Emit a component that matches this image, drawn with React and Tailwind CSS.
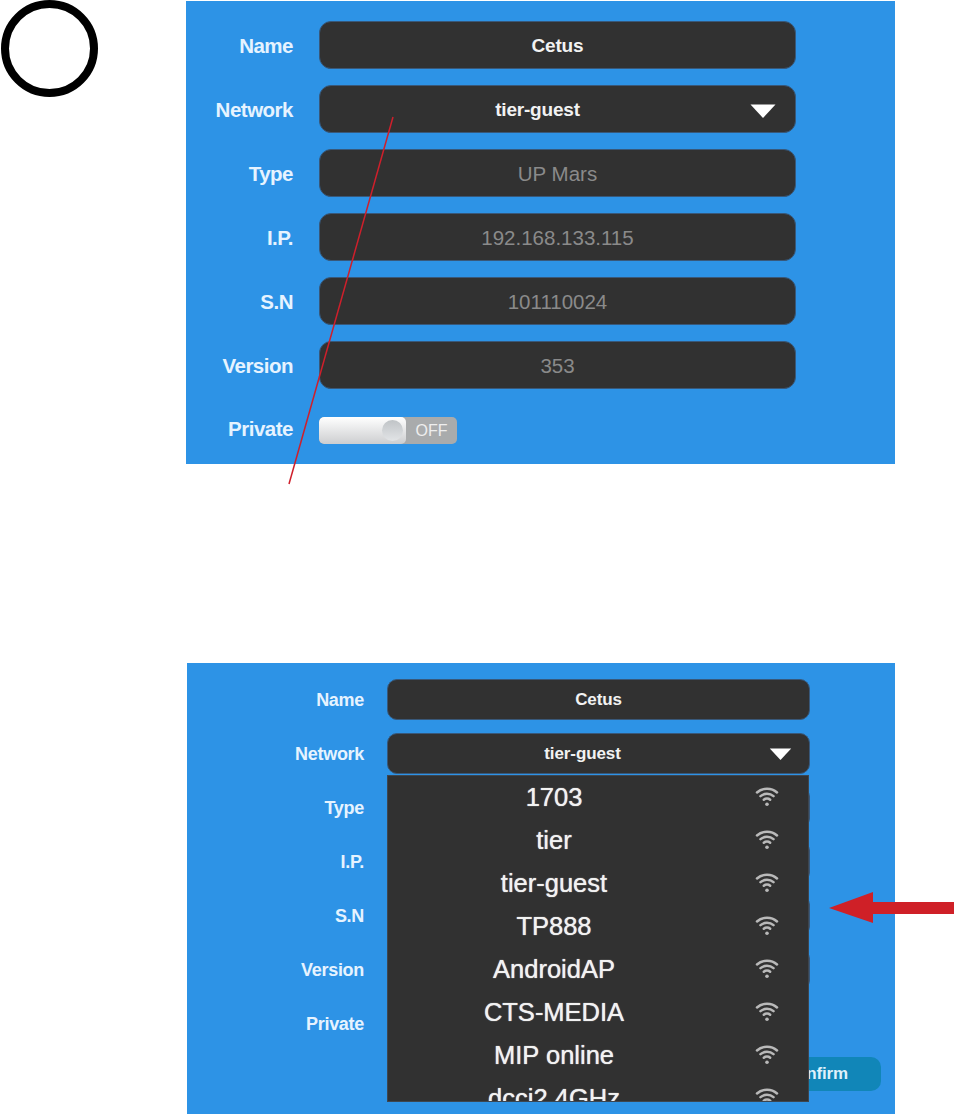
const NETWORKS = ["1703", "tier", "tier-guest", "TP888", "AndroidAP", "CTS-MEDIA", "MIP online", "dcci2.4GHz"];

const font = { fontFamily: '"Liberation Sans", Arial, sans-serif' };

function WifiIcon() {
  return (
    <svg width="24" height="22" viewBox="0 0 24 22" fill="none" stroke="#b9b9b9" strokeWidth="2.5" strokeLinecap="round">
      <path d="M2 7.5C7.5 2.4 16.5 2.4 22 7.5" />
      <path d="M5.5 11.2C9 8 15 8 18.5 11.2" />
      <path d="M8.8 14.7C10.6 13.2 13.4 13.2 15.2 14.7" />
      <circle cx="12" cy="19.3" r="1.8" fill="#b9b9b9" stroke="none" />
    </svg>
  );
}

function Caret({ className }) {
  return (
    <svg className={className} viewBox="0 0 26 14">
      <path d="M0.5 0.5H25.5L13 14Z" fill="#fff" />
    </svg>
  );
}

function Toggle({ className }) {
  return (
    <div className={`flex overflow-hidden rounded-[5px] bg-[#a9abac] ${className}`}>
      <div className="relative h-full w-[87px] rounded-[5px] bg-gradient-to-b from-white to-[#cdced0]">
        <div className="absolute right-[3px] top-[3px] h-[21px] w-[21px] rounded-full bg-gradient-to-b from-[#c0c4c7] to-[#e2e4e6]" />
      </div>
      <div className="flex-1 text-center text-[16px] leading-[28px] text-[#eeeeee]">OFF</div>
    </div>
  );
}

function TopRow({ label, value, muted, caret }) {
  return (
    <div className="flex h-12 items-center gap-[26px]">
      <div className="w-[107px] pt-[2px] text-right text-[20.5px] font-bold tracking-[-0.5px] text-[#e6f3ff]">{label}</div>
      <div
        className={`relative flex h-12 w-[477px] items-center justify-center rounded-[12px] border border-[#38587a] bg-[#313131] pt-[2px] ${
          muted ? "text-[20.5px] text-[#8a8a8a]" : "text-[19px] font-bold tracking-[-0.2px] text-[#f2f2f2]"
        } ${caret ? "pr-10" : ""}`}
      >
        {value}
        {caret && <Caret className="absolute right-[19px] top-[18px] h-[14px] w-[26px]" />}
      </div>
    </div>
  );
}

function BottomRow({ label, value, caret }) {
  return (
    <div className="flex h-[41px] items-center gap-[23px]">
      <div className="w-[177px] pt-px text-right text-[18px] font-bold tracking-[-0.3px] text-[#e6f3ff]">{label}</div>
      <div
        className={`relative flex h-[41px] w-[423px] items-center justify-center rounded-[10px] border border-[#38587a] bg-[#313131] pt-px text-[17px] font-bold tracking-[-0.1px] text-[#f2f2f2] ${
          caret ? "pr-8" : ""
        }`}
      >
        {value}
        {caret && <Caret className="absolute right-[17px] top-[14px] h-[12px] w-[23px]" />}
      </div>
    </div>
  );
}

export default function App() {
  return (
    <div className="relative h-[1114px] w-[954px] overflow-hidden bg-white" style={font}>
      {/* Marker and first screen */}
      <div className="flex items-start">
        <div className="ml-px h-[97px] w-[97px] rounded-full border-[8px] border-black" />
        <div className="ml-[88px] mt-px flex h-[463px] w-[709px] flex-col gap-4 bg-[#2d93e6] pt-5">
          <TopRow label="Name" value="Cetus" />
          <TopRow label="Network" value="tier-guest" caret />
          <TopRow label="Type" value="UP Mars" muted />
          <TopRow label="I.P." value="192.168.133.115" muted />
          <TopRow label="S.N" value="101110024" muted />
          <TopRow label="Version" value="353" muted />
          <div className="mt-3 flex h-[27px] items-center gap-[26px]">
            <div className="-mt-[3px] w-[107px] text-right text-[20.5px] font-bold tracking-[-0.5px] text-[#e6f3ff]">Private</div>
            <Toggle className="h-[27px] w-[138px]" />
          </div>
        </div>
      </div>

      {/* Second screen with the list open */}
      <div className="relative ml-[187px] mt-[199px] flex h-[451px] w-[708px] flex-col gap-[13px] bg-[#2d93e6] pt-4">
        <BottomRow label="Name" value="Cetus" />
        <BottomRow label="Network" value="tier-guest" caret />
        <BottomRow label="Type" value="" />
        <BottomRow label="I.P." value="" />
        <BottomRow label="S.N" value="" />
        <BottomRow label="Version" value="" />
        <div className="flex h-[41px] items-center gap-[23px]">
          <div className="w-[177px] pt-px text-right text-[18px] font-bold tracking-[-0.3px] text-[#e6f3ff]">Private</div>
        </div>
        <div className="flex justify-end pr-[14px]">
          <div className="flex h-[34px] w-[130px] items-center justify-center rounded-[10px] bg-[#1186b8] text-[17px] font-bold tracking-[-0.2px] text-[#dff1fb]">
            Confirm
          </div>
        </div>

        <div className="absolute left-[200px] top-[112px] h-[327px] w-[422px] overflow-hidden border border-[#3d4650] bg-[#313131]">
          {NETWORKS.map((name) => (
            <div key={name} className="flex h-[43px] items-center">
              <div className="-mt-px w-[332px] text-center text-[25.5px] text-[#f2f2f2] [text-shadow:0_0_1px_#f2f2f2]">
                {name}
              </div>
              <div className="-mt-[3px] ml-[35px]">
                <WifiIcon />
              </div>
            </div>
          ))}
        </div>
      </div>

      {/* Annotations */}
      <svg className="absolute left-[285px] top-[112px]" width="112" height="376">
        <path d="M108 5L4 372" stroke="#cf1f2b" strokeWidth="1.5" />
      </svg>
      <svg className="absolute left-[829px] top-[890px]" width="125" height="36">
        <path d="M0 18L44 2V12H125V24H44V33Z" fill="#cf2027" />
      </svg>
    </div>
  );
}
